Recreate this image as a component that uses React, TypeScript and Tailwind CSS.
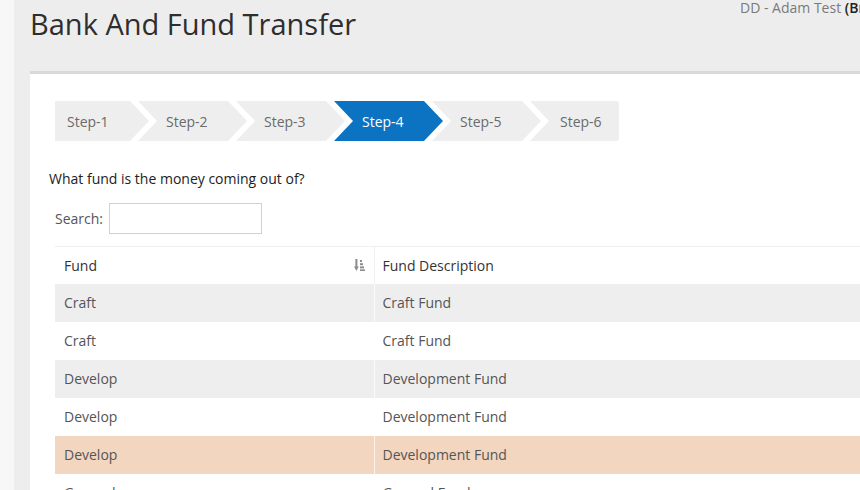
import React from 'react';

const steps = ['Step-1', 'Step-2', 'Step-3', 'Step-4', 'Step-5', 'Step-6'];

const rows = [
  { fund: 'Craft', desc: 'Craft Fund', tone: 'gray' },
  { fund: 'Craft', desc: 'Craft Fund', tone: 'white' },
  { fund: 'Develop', desc: 'Development Fund', tone: 'gray' },
  { fund: 'Develop', desc: 'Development Fund', tone: 'white' },
  { fund: 'Develop', desc: 'Development Fund', tone: 'peach' },
  { fund: 'General', desc: 'General Fund', tone: 'white' },
];

const toneClass: Record<string, string> = {
  gray: 'bg-[#efeeef]',
  white: 'bg-white',
  peach: 'bg-[#f2d6bf]',
};

const SortIcon = () => (
  <svg width="11" height="12" viewBox="0 0 11 12" className="text-[#8c8c8c]" fill="currentColor">
    <rect x="1.4" y="0" width="2" height="9" />
    <path d="M0 7.5h4.8L2.4 12z" />
    <rect x="6" y="1" width="2" height="2" />
    <rect x="6" y="4.2" width="3" height="2" />
    <rect x="6" y="7.4" width="4" height="2" />
    <rect x="6" y="10.4" width="5" height="1.6" />
  </svg>
);

const StepBar: React.FC<{ active: number }> = ({ active }) => (
  <div className="flex h-[40px]">
    {steps.map((label, i) => {
      const isFirst = i === 0;
      const isLast = i === steps.length - 1;
      const isActive = i === active;
      let shape = '[clip-path:polygon(0_0,90px_0,109px_50%,90px_100%,0_100%,19px_50%)] w-[109px] -ml-[11px] pl-[28px]';
      if (isFirst) shape = '[clip-path:polygon(0_0,75px_0,94px_50%,75px_100%,0_100%)] w-[94px] pl-[12px]';
      if (isLast) shape = '[clip-path:polygon(0_0,100%_0,100%_100%,0_100%,19px_50%)] w-[89px] -ml-[11px] pl-[30px] rounded-r-[3px]';
      return (
        <div
          key={label}
          className={`flex items-center text-[14px] ${shape} ${isActive ? 'bg-[#0c73c3] text-white' : 'bg-[#eeeeee] text-[#6a6a6a]'}`}
        >
          {label}
        </div>
      );
    })}
  </div>
);

export default function App() {
  return (
    <div className="flex h-[490px] w-[860px] overflow-hidden bg-[#f7f7f7] font-['Open_Sans',sans-serif]">
      <div className="w-[14px] shrink-0" />
      <div className="flex min-w-0 flex-1 flex-col bg-[#eeedee]">
        <header className="flex h-[71px] shrink-0 items-start">
          <h1 className="w-[726px] shrink-0 pl-4 pt-[5px] text-[29px] leading-[38px] text-[#2e2e2e]">Bank And Fund Transfer</h1>
          <div className="whitespace-nowrap text-[14px] leading-[15px] text-[#7a7a7a]">
            DD - Adam Test <span className="font-semibold text-[#222]">(Branch)</span>
          </div>
        </header>
        <main className="ml-4 flex-1 border-t-[3px] border-[#d9d9d9] bg-white pl-[25px] pt-[27px]">
          <StepBar active={3} />
          <p className="-ml-[6px] mt-[28px] text-[14px] leading-[20px] text-[#222]">What fund is the money coming out of?</p>
          <div className="mt-[14px] flex items-center gap-[6px] text-[14px] text-[#555]">
            <span>Search:</span>
            <input className="h-[31px] w-[153px] border border-[#d0d0d0] px-2 outline-none" />
          </div>
          <table className="mt-[12px] w-[900px] border-collapse text-[14px]">
            <thead>
              <tr className="h-[37px] border-t border-[#eeeeee]">
                <th className="w-[319px] px-[9px] text-left font-medium text-[#333]">
                  <div className="flex items-center justify-between">
                    <span>Fund</span>
                    <SortIcon />
                  </div>
                </th>
                <th className="border-l border-[#f0f0f0] px-[8px] text-left font-medium text-[#333]">Fund Description</th>
              </tr>
            </thead>
            <tbody>
              {rows.map((r, i) => (
                <tr key={i} className={`h-[38px] ${toneClass[r.tone]}`}>
                  <td className="px-[9px] text-[#555]">{r.fund}</td>
                  <td className="border-l border-white/70 px-[8px] text-[#555]">{r.desc}</td>
                </tr>
              ))}
            </tbody>
          </table>
        </main>
      </div>
    </div>
  );
}
